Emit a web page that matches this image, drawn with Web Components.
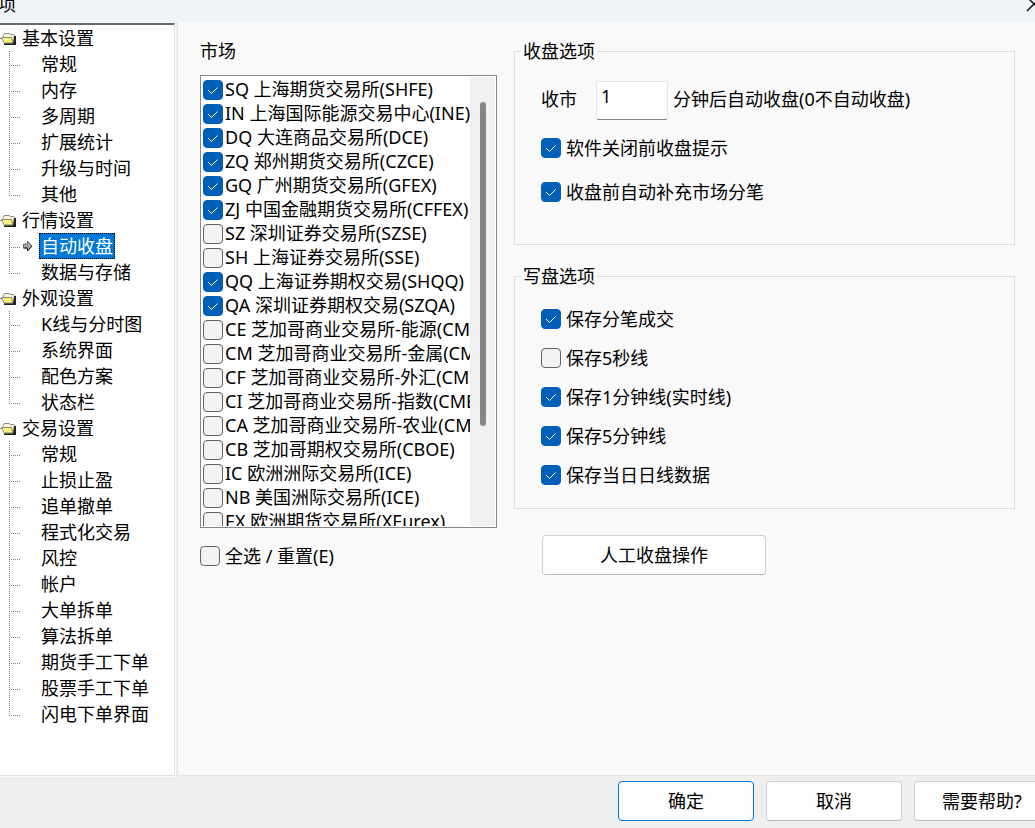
<!DOCTYPE html>
<html lang="zh-CN">
<head>
<meta charset="utf-8">
<title>选项</title>
<style>
html, body { margin: 0; height: 100%; }
body { font: 18px/26px "Noto Sans", "Noto Sans CJK SC", sans-serif; color: #000; overflow: hidden; }
</style>
</head>
<body>
<options-dialog></options-dialog>
<script>
const define = (name, html, setup) => {
  const template = document.createElement('template');
  template.innerHTML = html;
  customElements.define(name, class extends HTMLElement {
    constructor() {
      super();
      this.attachShadow({ mode: 'open' }).append(template.content.cloneNode(true));
    }
    connectedCallback() { if (setup) setup(this, this.shadowRoot); }
  });
};

define('title-bar', `
<style>
:host { display: flex; justify-content: space-between; align-items: center; box-sizing: border-box; height: 22px; padding-bottom: 14px; background: #eef3f8; overflow: hidden; }
span { margin-left: -2px; }
button { flex: none; width: 16px; height: 16px; margin-right: -7px; padding: 0; border: 0; background: none; }
svg { display: block; }
</style>
<span><slot></slot></span>
<button aria-label="关闭"><svg width="16" height="16" viewBox="0 0 16 16"><path d="M1 1 15 15M15 1 1 15" stroke="#111" stroke-width="1.5" fill="none"/></svg></button>`);

define('tree-group', `
<style>
:host { display: block; }
.head { display: flex; align-items: center; height: 26px; gap: 6px; }
svg { flex: none; }
</style>
<div class="head">
<svg width="16" height="13" viewBox="0 0 16 13"><path d="M3 3.500 4.500 1.500h4.500l1.500 1h3l1 1v8H5z" fill="#f6f4d8" stroke="#8a8a80"/><path d="M1.500 5.500h10l1.500 5.500H4z" fill="#f4f05a" stroke="#8a8a80"/><path d="M3 7.500h8M4 9.500h8" stroke="#fffde0" stroke-dasharray="1 1"/><path d="M0 6.500h2" stroke="#808080"/><path d="M14 4h2v9H4v-1.500h9z" fill="#222"/></svg>
<span></span></div>
<slot></slot>`, (el, root) => { root.querySelector('span').textContent = el.getAttribute('name'); });

define('tree-item', `
<style>
:host { display: flex; align-items: center; height: 26px; padding-left: 9px; }
.lines { flex: none; align-self: stretch; width: 12px;
  background: repeating-linear-gradient(90deg, #808080 0 1px, transparent 1px 2px) 0 14px / 12px 1px no-repeat,
    repeating-linear-gradient(180deg, #808080 0 1px, transparent 1px 2px) 0 0 / 1px 26px no-repeat; }
:host(:last-of-type) .lines { background-size: 12px 1px, 1px 15px; }
.mark { flex: none; display: flex; align-items: center; width: 18px; }
svg { margin-left: 2px; visibility: hidden; }
a { color: inherit; text-decoration: none; padding: 0 2px; outline: none; }
:host([current]) svg { visibility: visible; }
:host([current]) a { background: #0078d7; color: #fff; outline: 1px dotted #000; outline-offset: -1px; }
</style>
<span class="lines"></span>
<span class="mark"><svg width="10" height="12" viewBox="0 0 10 12"><path d="M.5 4h4V1L9 6l-4.500 5V8h-4z" fill="#a8a8a8" stroke="#666"/><path d="M.5 8h4v3L9 6" fill="none" stroke="#222"/></svg></span>
<a href="#"><slot></slot></a>`, (el, root) => { if (el.hasAttribute('current')) root.querySelector('a').setAttribute('aria-current', 'page'); });

define('check-item', `
<style>
:host { display: block; }
label { display: flex; align-items: center; gap: var(--check-gap, 5px); height: 24px; line-height: var(--check-line, 24px); white-space: nowrap; }
input { appearance: none; flex: none; width: 20px; height: 20px; margin: 0; box-sizing: border-box; border: 1px solid #626262; border-radius: 4px; background: #f3f3f3; }
span { height: 24px; }
input:checked { border-color: #005fb8; background: #005fb8 url("data:image/svg+xml,%3Csvg xmlns='http://www.w3.org/2000/svg' viewBox='0 0 18 18'%3E%3Cpath d='M4 9l3.500 3.500L13.500 6.500' fill='none' stroke='white' stroke-width='1'/%3E%3C/svg%3E"); }
</style>
<label><input type="checkbox"><span><slot></slot></span></label>`, (el, root) => { root.querySelector('input').checked = el.hasAttribute('checked'); });

define('push-button', `
<style>
:host { display: block; flex: none; width: 136px; height: 40px; }
button { display: block; width: 100%; height: 100%; padding: 0; font: inherit; color: inherit; background: #fdfdfd; border: 1px solid #d0d0d0; border-bottom-color: #b8b8b8; border-radius: 4px; }
:host([primary]) button { border-color: #0078d4; }
</style>
<button><slot></slot></button>`);

define('option-group', `
<style>
:host { display: block; }
fieldset { box-sizing: border-box; height: 100%; min-width: 0; margin: 0; padding: var(--group-top, 17px) 26px 0; border: 1px solid #dcdcdc; }
legend { margin-left: -20px; padding: 0 2px; height: 26px; }
.rows { display: flex; flex-direction: column; gap: var(--row-gap); }
</style>
<fieldset><legend></legend><div class="rows"><slot></slot></div></fieldset>`, (el, root) => { root.querySelector('legend').textContent = el.getAttribute('name'); });

define('minutes-field', `
<style>
:host { display: flex; align-items: center; white-space: nowrap; }
label { padding-bottom: 3px; }
input { box-sizing: border-box; width: 72px; height: 39px; margin: 0 5px 0 19px; padding: 0 4px 9px; font: inherit; color: inherit; background: #fff; border: 1px solid #e5e5e5; border-bottom-color: #868686; border-radius: 2px; outline: none; }
</style>
<label for="m">收市</label><input id="m" type="text" value="1"><label for="m">分钟后自动收盘(0不自动收盘)</label>`);

define('market-list', `
<style>
:host { display: flex; box-sizing: border-box; height: 453px; padding: 1px; border: 1px solid #828790; background: #fff; --check-gap: 2px; --check-line: 22px; }
.items { flex: 1; min-width: 0; overflow: hidden; padding: 1px 0 0 1px; }
.bar { flex: none; width: 25px; background: #f0f0f0; box-sizing: border-box; padding: 25px 9px 0 10px; }
.thumb { height: 324px; border-radius: 3px; background: #868686; }
</style>
<div class="items"><slot></slot></div><div class="bar"><div class="thumb"></div></div>`);

define('options-dialog', `
<style>
:host { display: grid; grid-template: 22px minmax(0, 1fr) 51px / 176px minmax(0, 1fr); height: 100vh; overflow: hidden; background: #efefef; }
title-bar, footer { grid-column: 1 / -1; }
nav { box-sizing: border-box; margin: 1px 1px 1px 0; background: #fff; border-top: 2px solid #696969; border-right: 1px solid #e3e3e3; border-bottom: 1px solid #e3e3e3; overflow: hidden; white-space: nowrap; }
.side { display: grid; background: #fbfbfb; }
main { display: grid; grid-template-columns: 297px minmax(0, 1fr); column-gap: 17px; align-items: start; box-sizing: border-box; margin-bottom: 1px; padding: 16px 20px 0 22px; margin-left: 1px; background: #f9f9f9; border: solid #e3e3e3; border-width: 0 0 1px 1px; }
h2 { margin: 0 0 11px; font: inherit; }
.all { margin-top: 16px; }
.close { height: 207px; --row-gap: 20px; }
.close minutes-field { margin-bottom: -4px; }
.write { height: 246px; margin-top: 18px; --row-gap: 15px; --group-top: 18px; }
.manual { width: 224px; margin: 26px 0 0 28px; }
footer { display: flex; justify-content: flex-end; gap: 12px; box-sizing: border-box; padding-top: 4px; margin-right: -15px; }
</style>
<title-bar>项</title-bar>
<div class="side"><nav>
<tree-group name="基本设置"><tree-item>常规</tree-item><tree-item>内存</tree-item><tree-item>多周期</tree-item><tree-item>扩展统计</tree-item><tree-item>升级与时间</tree-item><tree-item>其他</tree-item></tree-group>
<tree-group name="行情设置"><tree-item current>自动收盘</tree-item><tree-item>数据与存储</tree-item></tree-group>
<tree-group name="外观设置"><tree-item>K线与分时图</tree-item><tree-item>系统界面</tree-item><tree-item>配色方案</tree-item><tree-item>状态栏</tree-item></tree-group>
<tree-group name="交易设置"><tree-item>常规</tree-item><tree-item>止损止盈</tree-item><tree-item>追单撤单</tree-item><tree-item>程式化交易</tree-item><tree-item>风控</tree-item><tree-item>帐户</tree-item><tree-item>大单拆单</tree-item><tree-item>算法拆单</tree-item><tree-item>期货手工下单</tree-item><tree-item>股票手工下单</tree-item><tree-item>闪电下单界面</tree-item></tree-group>
</nav></div>
<main>
<section>
<h2>市场</h2>
<market-list>
<check-item checked>SQ 上海期货交易所(SHFE)</check-item>
<check-item checked>IN 上海国际能源交易中心(INE)</check-item>
<check-item checked>DQ 大连商品交易所(DCE)</check-item>
<check-item checked>ZQ 郑州期货交易所(CZCE)</check-item>
<check-item checked>GQ 广州期货交易所(GFEX)</check-item>
<check-item checked>ZJ 中国金融期货交易所(CFFEX)</check-item>
<check-item>SZ 深圳证券交易所(SZSE)</check-item>
<check-item>SH 上海证券交易所(SSE)</check-item>
<check-item checked>QQ 上海证券期权交易(SHQQ)</check-item>
<check-item checked>QA 深圳证券期权交易(SZQA)</check-item>
<check-item>CE 芝加哥商业交易所-能源(CME)</check-item>
<check-item>CM 芝加哥商业交易所-金属(CME)</check-item>
<check-item>CF 芝加哥商业交易所-外汇(CME)</check-item>
<check-item>CI 芝加哥商业交易所-指数(CME)</check-item>
<check-item>CA 芝加哥商业交易所-农业(CME)</check-item>
<check-item>CB 芝加哥期权交易所(CBOE)</check-item>
<check-item>IC 欧洲洲际交易所(ICE)</check-item>
<check-item>NB 美国洲际交易所(ICE)</check-item>
<check-item>EX 欧洲期货交易所(XEurex)</check-item>
</market-list>
<check-item class="all">全选 / 重置(E)</check-item>
</section>
<section>
<option-group class="close" name="收盘选项">
<minutes-field></minutes-field>
<check-item checked>软件关闭前收盘提示</check-item>
<check-item checked>收盘前自动补充市场分笔</check-item>
</option-group>
<option-group class="write" name="写盘选项">
<check-item checked>保存分笔成交</check-item>
<check-item>保存5秒线</check-item>
<check-item checked>保存1分钟线(实时线)</check-item>
<check-item checked>保存5分钟线</check-item>
<check-item checked>保存当日日线数据</check-item>
</option-group>
<push-button class="manual">人工收盘操作</push-button>
</section>
</main>
<footer><push-button primary>确定</push-button><push-button>取消</push-button><push-button>需要帮助?</push-button></footer>`);
</script>
</body>
</html>
